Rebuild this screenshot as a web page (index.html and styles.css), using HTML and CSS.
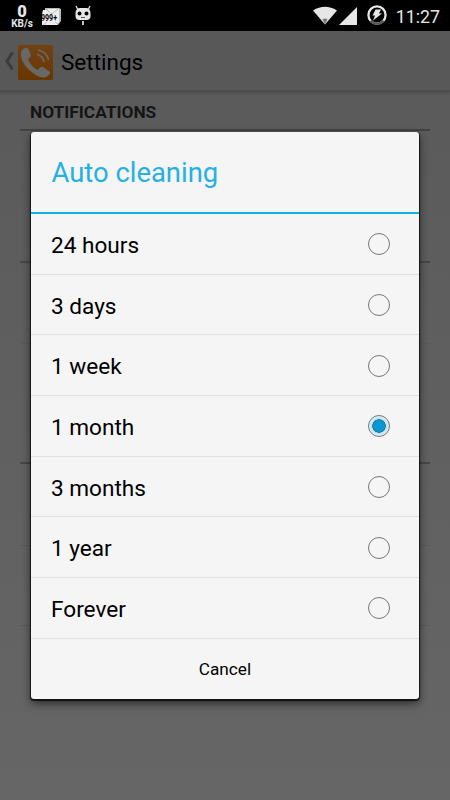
FILE: index.html
```html
<!DOCTYPE html>
<html lang="en">
<head>
    <meta charset="UTF-8">
    <meta name="viewport" content="width=device-width, initial-scale=1.0">
    <title>Settings</title>
    <link rel="stylesheet" href="styles.css">
</head>
<body>

<div class="status-bar">
    <div class="net-speed"><b>0</b><span>KB/s</span></div>
    <svg class="mail-icon" width="22" height="18" viewBox="0 0 22 18">
        <path d="M4 0h14l2 1v12l-3 4H4z" fill="#bbb"/>
        <path d="M2 2h4l1-1h11v13l-2 3H1V6z" fill="#eee"/>
        <path d="M6 2l5 4 6-5M2 17l4-3M17 16l-3-2" fill="none" stroke="#bbb"/>
        <text x="0" y="13" textLength="16" lengthAdjust="spacingAndGlyphs">999+</text>
    </svg>
    <svg class="cid-icon" width="18" height="21" viewBox="0 0 18 21">
        <path d="M3.500 4L2 1M14.500 4L16 1" stroke="#e6e6e6" stroke-width="1.300"/>
        <path d="M1.500 8Q2 3 6 3h6q4 0 4.500 5v3q0 4-4 4h-7q-4 0-4-4z" fill="#e6e6e6"/>
        <circle cx="5.500" cy="8.500" r="2" fill="#000"/>
        <circle cx="12.500" cy="8.500" r="2" fill="#000"/>
        <path d="M7 12.500h4" stroke="#555"/>
        <path d="M9 16v4" stroke="#e6e6e6" stroke-width="1.700"/>
    </svg>
    <div class="status-right">
        <svg width="24" height="19" viewBox="0 0 24 19">
            <path d="M0 4.500Q12-3 24 4.500L12 18.500z" fill="#e6e6e6"/>
            <path d="M9.500 13Q12 12 14.500 13L12 18.500z" fill="#777"/>
        </svg>
        <svg class="signal-icon" width="18" height="18" viewBox="0 0 18 18">
            <path d="M18 0v18H0z" fill="#e6e6e6"/>
        </svg>
        <svg class="battery-icon" width="20" height="20" viewBox="0 0 20 20">
            <circle cx="10" cy="10" r="8.600" fill="none" stroke="#e6e6e6" stroke-width="2.300"/>
            <path d="M3.500 15.700A8.600 8.600 0 0 0 16.500 15.700" fill="none" stroke="#555" stroke-width="2.300"/>
            <path d="M8.500 4.500h5.500l-2 4h3L6 15.500l2-5H5.500z" fill="#e6e6e6"/>
        </svg>
        <span class="clock">11:27</span>
    </div>
</div>

<div class="action-bar">
    <svg class="back-icon" width="10" height="20" viewBox="0 0 10 20">
        <path d="M8.500 1.500L3 10l5.500 8.500" fill="none" stroke="#3b3b3b" stroke-width="3"/>
    </svg>
    <svg class="app-icon" width="35" height="35" viewBox="0 0 35 35">
        <defs>
            <linearGradient id="orange" x1="0" y1="0" x2="0" y2="1">
                <stop offset="0" stop-color="#704213"/>
                <stop offset="1" stop-color="#693600"/>
            </linearGradient>
        </defs>
        <rect width="35" height="35" rx="1.500" fill="url(#orange)"/>
        <path d="M4 5Q8 1.500 10 3.500L13 10Q13 12 10 14Q12 21 20 25Q22 21 25 22L32 27Q33 29 28 32Q23 34 15 28Q4 20 3 11Q2.500 7 4 5z" fill="#686868"/>
        <path d="M19 9.500Q25 11 26 17M20 5Q29 7 30.500 15" fill="none" stroke="#686868" stroke-width="1.700"/>
    </svg>
    <span class="page-title">Settings</span>
</div>

<div class="settings">
    <h2>NOTIFICATIONS</h2>
    <div class="pref-group pref-group-1"></div>
    <div class="pref-item pref-item-1"></div>
    <div class="pref-group pref-group-2"></div>
    <div class="pref-item pref-item-2"></div>
    <div class="pref-item pref-item-3"></div>
</div>

<div class="dialog">
    <h1>Auto cleaning</h1>
    <label class="option">24 hours <input type="radio" name="period"></label>
    <label class="option">3 days <input type="radio" name="period"></label>
    <label class="option">1 week <input type="radio" name="period"></label>
    <label class="option">1 month <input type="radio" name="period" checked></label>
    <label class="option">3 months <input type="radio" name="period"></label>
    <label class="option">1 year <input type="radio" name="period"></label>
    <label class="option">Forever <input type="radio" name="period"></label>
    <button class="cancel">Cancel</button>
</div>

</body>
</html>
```
FILE: styles.css
```css
* {
    box-sizing: border-box;
}
body {
    margin: 0;
    height: 800px;
    overflow: hidden;
    position: relative;
    font-family: Roboto, sans-serif;
    color: #000;
    background: linear-gradient(#595959, #666);
}
.status-bar {
    display: flex;
    height: 31px;
    padding-left: 11px;
    background: #000;
    color: #e6e6e6;
}
.net-speed {
    display: flex;
    flex-direction: column;
    align-items: center;
    width: 22px;
    padding-top: 4px;
    font-size: 10px;
    line-height: 9px;
    font-weight: 700;
}
.net-speed b {
    font-size: 16.500px;
    line-height: 15px;
}
.mail-icon {
    margin: 8px 0 0 8px;
}
.mail-icon text {
    font-size: 9px;
    font-weight: 700;
    fill: #000;
}
.cid-icon {
    margin: 5px 0 0 11px;
}
.status-right {
    display: flex;
    margin-left: auto;
    padding: 6px 10px 0 0;
}
.signal-icon {
    margin: 1px 0 0 2px;
}
.battery-icon {
    margin: -1px 0 0 10px;
}
.clock {
    margin-left: 9px;
    font-size: 17.800px;
    line-height: 21px;
}
.action-bar {
    display: flex;
    align-items: center;
    height: 61px;
    padding-left: 4px;
    background: #585858;
    border-bottom: 2px solid #4d4d4d;
    box-shadow: 0 1px 3px rgba(0, 0, 0, 0.2);
}
.app-icon {
    margin: 3px 0 0 4px;
}
.page-title {
    margin: 3px 0 0 8px;
    font-size: 22.500px;
}

/* list behind the dialog */
.settings {
    padding: 0 20px;
}
.settings h2 {
    height: 39px;
    margin: 0;
    padding: 10px 10px 0;
    font-size: 17.300px;
    line-height: 20px;
    font-weight: 700;
    color: #151515;
    border-bottom: 2px solid #434343;
}
.pref-group {
    border-bottom: 2px solid #474747;
}
.pref-item {
    border-bottom: 1px solid #595959;
}
.pref-group-1 {
    height: 132px;
}
.pref-item-1 {
    height: 81px;
}
.pref-group-2 {
    height: 120px;
}
.pref-item-2 {
    height: 82px;
}
.pref-item-3 {
    height: 80px;
}

.dialog {
    position: absolute;
    top: 132px;
    left: 31px;
    width: 388px;
    height: 567px;
    border-radius: 3px;
    background: #f5f5f5;
    box-shadow: 0 1px 1px 1px rgba(0, 0, 0, 0.7), 0 4px 10px rgba(0, 0, 0, 0.6);
}
.dialog h1 {
    height: 82px;
    margin: 0;
    padding-left: 20.500px;
    font-size: 27.400px;
    line-height: 83px;
    font-weight: 400;
    color: #26b0e3;
    border-bottom: 2px solid #0fb3e3;
}
.option {
    display: flex;
    align-items: center;
    justify-content: space-between;
    height: 60.700px;
    padding: 3px 29.500px 0 20px;
    font-size: 22.600px;
    border-bottom: 1px solid #e0e0e0;
}
.option input {
    appearance: none;
    width: 22px;
    height: 22px;
    margin: 0 0 2px;
    border: 1px solid #777;
    border-radius: 50%;
}
.option input:checked {
    background: radial-gradient(circle, #0898d2 0 5.500px, #287d9d 6px 6.500px, #b9e1f1 7px, #e3f2f9 10px);
}
.cancel {
    display: block;
    width: 100%;
    height: 60px;
    padding: 0;
    border: none;
    background: none;
    font-family: inherit;
    font-size: 17.200px;
    color: #000;
}
```
